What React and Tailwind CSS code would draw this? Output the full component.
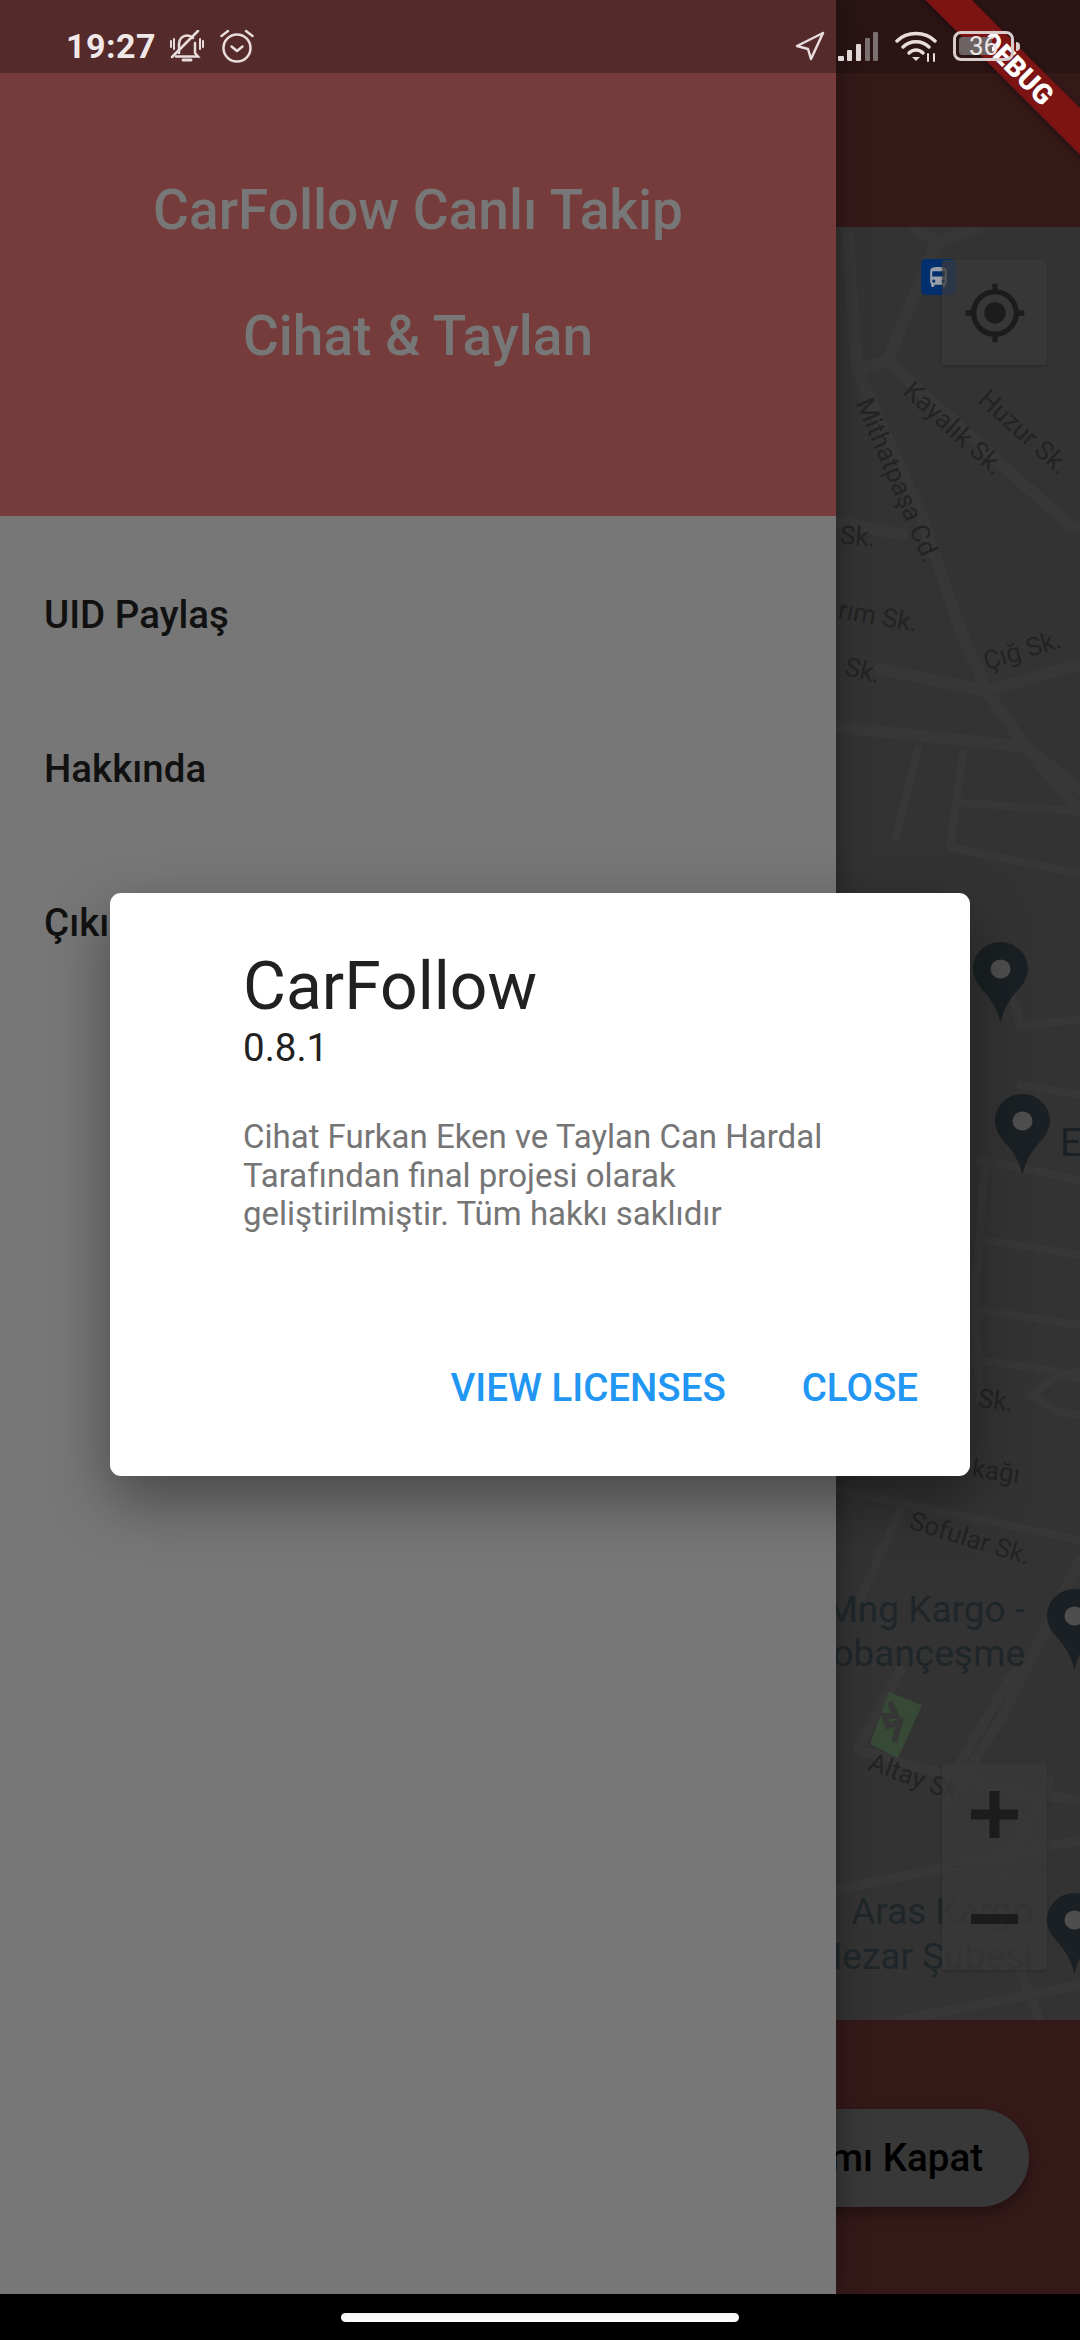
import React from 'react'

const PinIcon = ({ className }) => (
  <svg viewBox="0 0 55 81" className={className}>
    <path fill="#1a2023" d="M27.5 0C12.3 0 0 12 0 27c0 10 6 17 13 25 6 7 11 15 14.500 29 3-14 8-22 14-29 7-8 13.500-15 13.500-25C55 12 42.700 0 27.500 0z" />
    <ellipse cx="27.500" cy="27" rx="10" ry="9.500" fill="#4e4e4e" />
  </svg>
)

const MapRoads = () => (
  <svg viewBox="836 227 244 1793" className="absolute right-0 top-0 w-[244px] h-[1793px]" fill="none" stroke="#373737" strokeLinejoin="round" strokeLinecap="round">
    <g strokeWidth="12">
      <path d="M847 227L857 370L920 512L960 629L987 691L1027 749L1080 811" />
      <path d="M857 370L887 361L937 242L915 227" />
      <path d="M937 242L980 227" />
      <path d="M887 361L1070 526L1080 528" />
      <path d="M836 727L963 740L1027 747L1080 790" />
      <path d="M880 669L987 691L1080 664" />
      <path d="M836 521L903 535" />
    </g>
    <g strokeWidth="8">
      <path d="M918 749L896 838" />
      <path d="M963 753L950 847L1080 874" />
      <path d="M963 803L1080 811" />
      <path d="M1000 945L1020 1025L1080 1020" />
      <path d="M1020 1085L1080 1095" />
      <path d="M980 1160L1080 1180" />
      <path d="M985 1240L1080 1255" />
      <path d="M980 1310L1080 1325" />
      <path d="M985 1160L975 1300L980 1400" />
      <path d="M975 1360L1050 1370L1080 1380" />
      <path d="M1030 1395L1060 1375L1080 1372" />
      <path d="M1030 1395L1060 1412L1080 1415" />
      <path d="M836 1490L1080 1540" />
      <path d="M900 1510L860 1600" />
    </g>
    <g strokeWidth="10">
      <path d="M1080 1560L1000 1720L950 1800" />
      <path d="M900 1670L858 1750" />
      <path d="M1015 1670L950 1780" />
      <path d="M858 1750L1000 1790L1080 1800" />
      <path d="M1050 1780L1000 1880" />
      <path d="M836 1890L1080 1840" />
      <path d="M1020 1970L1040 2020" />
      <path d="M900 2020L1080 1985" />
    </g>
  </svg>
)

const BellOffIcon = () => (
  <svg viewBox="0 0 34 33" className="w-[34px] h-[33px]" fill="none" stroke="#e8dcdc" strokeWidth="2.500" strokeLinecap="round">
    <path d="M9 23V14c0-5 3.500-8.500 8-8.500 2.500 0 4.500 1 6 2.500M25 13v10l3 3.500H6" />
    <path d="M13 30h8" strokeWidth="3" />
    <path d="M2 27L28 1" />
    <path d="M1 11v6M4 9v10M30 9v10M33 11v6" strokeWidth="2" />
  </svg>
)

const AlarmIcon = () => (
  <svg viewBox="0 0 34 34" className="w-[34px] h-[34px]" fill="none" stroke="#e8dcdc" strokeWidth="2.500" strokeLinecap="round" strokeLinejoin="round">
    <circle cx="17" cy="19" r="13.500" />
    <path d="M11.500 17.500L17 22l5.500-4.500" />
    <path d="M1.500 7L8 2M32.500 7L26 2" />
  </svg>
)

const NavArrowIcon = () => (
  <svg viewBox="0 0 30 30" className="w-[30px] h-[30px]" fill="none" stroke="#e8dcdc" strokeWidth="2.500" strokeLinejoin="round">
    <path d="M28 2L2 15l11 3 3 10z" />
  </svg>
)

const SignalIcon = () => (
  <svg viewBox="0 0 40 29" className="w-[40px] h-[29px]">
    <rect x="0" y="24" width="6" height="5" rx="1" fill="#e0d6d6" />
    <rect x="9" y="18" width="5" height="11" rx="1" fill="#e0d6d6" />
    <rect x="18" y="12" width="5" height="17" rx="1" fill="#e0d6d6" />
    <rect x="27" y="6" width="5" height="23" rx="1" fill="#7a7070" />
    <rect x="35" y="0" width="5" height="29" rx="1" fill="#7a7070" />
  </svg>
)

const WifiIcon = () => (
  <svg viewBox="0 0 43 32" className="w-[43px] h-[32px]" fill="none" stroke="#e8dcdc" strokeWidth="3.500" strokeLinecap="round">
    <path d="M2 11C12 1 30 1 40 11" />
    <path d="M8 17C15 10 27 10 34 17" />
    <path d="M14 23C18 19 24 19 28 23" />
    <path d="M21 31l-4-4h8z" fill="#e8dcdc" stroke="none" />
    <path d="M33 31v-7M39 31v-7" strokeWidth="2" />
  </svg>
)

const StatusBar = () => (
  <div className="absolute left-0 top-0 z-30 w-full h-[73px] flex items-center pl-[66px] pr-[60px] pt-[19px] text-[#f0e8e8]">
    <span className="text-[34px] leading-none font-bold tracking-[0.5px]">19:27</span>
    <div className="ml-[14px] flex items-center gap-[16px]"><BellOffIcon /><AlarmIcon /></div>
    <div className="ml-auto flex items-center">
      <NavArrowIcon />
      <div className="ml-[13px]"><SignalIcon /></div>
      <div className="ml-[17px]"><WifiIcon /></div>
      <div className="ml-[15px] flex items-center">
        <div className="relative w-[61px] h-[30px] rounded-[8px] border-[3px] border-[#d8cccc] flex items-center justify-center">
          <div className="absolute left-[3px] top-[3px] bottom-[3px] w-[33px] rounded-[3px] bg-[#6d6363]" />
          <span className="relative text-[26px] leading-none text-[#eee6e6]">36</span>
        </div>
        <div className="ml-[2px] w-[4px] h-[9px] rounded-r-sm bg-[#d8cccc]" />
      </div>
    </div>
  </div>
)

const DebugBanner = () => (
  <div className="absolute z-20 left-[867px] top-[52px] w-[300px] h-[33px] rotate-45 bg-[#7c1414] flex items-center justify-center shadow-[0_2px_6px_rgba(0,0,0,0.3)]">
    <span className="text-[28px] leading-none font-black text-white">DEBUG</span>
  </div>
)

const MapView = () => (
  <div className="relative h-[1793px] bg-[#333333] overflow-hidden">
    <MapRoads />
    {/* street labels */}
    <span className="absolute left-[898px] top-[253px] -translate-x-1/2 -translate-y-1/2 rotate-[67deg] whitespace-nowrap text-[26px] leading-none text-[#232323]">Mithatpaşa Cd.</span>
    <span className="absolute left-[954px] top-[201px] -translate-x-1/2 -translate-y-1/2 rotate-[42deg] whitespace-nowrap text-[26px] leading-none text-[#232323]">Kayalık Sk.</span>
    <span className="absolute left-[1024px] top-[205px] -translate-x-1/2 -translate-y-1/2 rotate-[42deg] whitespace-nowrap text-[26px] leading-none text-[#232323]">Huzur Sk.</span>
    <span className="absolute left-[840px] top-[296px] rotate-[5deg] whitespace-nowrap text-[26px] leading-none text-[#232323]">Sk.</span>
    <span className="absolute left-[838px] top-[376px] rotate-[10deg] whitespace-nowrap text-[26px] leading-none text-[#232323]">rım Sk.</span>
    <span className="absolute left-[845px] top-[430px] rotate-[14deg] whitespace-nowrap text-[26px] leading-none text-[#232323]">Sk.</span>
    <span className="absolute left-[1022px] top-[423px] -translate-x-1/2 -translate-y-1/2 -rotate-[17deg] whitespace-nowrap text-[26px] leading-none text-[#232323]">Çığ Sk.</span>
    <span className="absolute left-[978px] top-[1160px] rotate-[8deg] whitespace-nowrap text-[26px] leading-none text-[#232323]">Sk.</span>
    <span className="absolute left-[972px] top-[1231px] rotate-[8deg] whitespace-nowrap text-[26px] leading-none text-[#232323]">kağı</span>
    <span className="absolute left-[970px] top-[1311px] -translate-x-1/2 -translate-y-1/2 rotate-[17deg] whitespace-nowrap text-[26px] leading-none text-[#232323]">Sofular Sk.</span>
    {/* park */}
    <svg viewBox="0 0 52 66" className="absolute left-[870px] top-[1465px] w-[52px] h-[66px]">
      <path d="M19 0L52 13 28 66 0 52z" fill="#374a35" />
      <path d="M20 10L26 24 14 24 18 34 30 30 24 50" fill="none" stroke="#363636" strokeWidth="6" />
    </svg>
    <span className="absolute left-[917px] top-[1551px] -translate-x-1/2 -translate-y-1/2 rotate-[20deg] whitespace-nowrap text-[26px] leading-none text-[#232323]">Altay Sk.</span>
    {/* place labels */}
    <span className="absolute right-[55px] top-[1361px] whitespace-nowrap text-[37px] leading-[44px] text-right text-[#1f2629]">Mng Kargo -<br />Çobançeşme</span>
    <span className="absolute right-[47px] top-[1662px] whitespace-nowrap text-[37px] leading-[45px] text-right text-[#1f2629]">Aras Kargo<br />Mezar Şubesi</span>
    <span className="absolute left-[1060px] top-[894px] text-[38px] leading-[44px] text-[#1a2023]">E</span>
    {/* pins */}
    <PinIcon className="absolute left-[973px] top-[715px] w-[55px] h-[81px]" />
    <PinIcon className="absolute left-[995px] top-[867px] w-[55px] h-[81px]" />
    <PinIcon className="absolute left-[1047px] top-[1362px] w-[55px] h-[81px]" />
    <PinIcon className="absolute left-[1047px] top-[1666px] w-[55px] h-[81px]" />
    {/* bus stop */}
    <div className="absolute left-[921px] top-[32px] w-[35px] h-[36px] rounded-[5px] bg-[#02306f] flex items-center justify-center">
      <svg viewBox="0 0 24 24" className="w-[25px] h-[25px]" fill="#9a9fa8">
        <path d="M4 16c0 .88.39 1.67 1 2.220V20c0 .55.45 1 1 1h1c.55 0 1-.45 1-1v-1h8v1c0 .55.45 1 1 1h1c.55 0 1-.45 1-1v-1.780c.61-.55 1-1.340 1-2.220V6c0-3.500-3.580-4-8-4s-8 .5-8 4v10zm3.500 1c-.83 0-1.500-.67-1.500-1.500S6.670 14 7.500 14s1.500.67 1.500 1.500S8.330 17 7.500 17zm9 0c-.83 0-1.500-.67-1.500-1.500s.67-1.500 1.500-1.500 1.500.67 1.500 1.500-.67 1.500-1.500 1.500zm1.500-6H6V6h12v5z" />
      </svg>
    </div>
    {/* map controls */}
    <div className="absolute left-[942px] top-[33px] w-[105px] h-[105px] rounded-[3px] bg-[#3a3a3a]/75 shadow-[0_1px_3px_rgba(0,0,0,0.2)] flex items-center justify-center">
      <svg viewBox="0 0 24 24" className="w-[64px] h-[64px]" fill="#1c1c1c">
        <path d="M12 8c-2.210 0-4 1.790-4 4s1.790 4 4 4 4-1.790 4-4-1.790-4-4-4zm8.940 3c-.46-4.170-3.770-7.480-7.940-7.940V1h-2v2.060C6.830 3.520 3.520 6.830 3.060 11H1v2h2.060c.46 4.170 3.770 7.480 7.940 7.940V23h2v-2.060c4.170-.46 7.480-3.770 7.940-7.940H23v-2h-2.060zM12 19c-3.870 0-7-3.130-7-7s3.130-7 7-7 7 3.130 7 7-3.130 7-7 7z" />
      </svg>
    </div>
    <div className="absolute left-[942px] top-[1536px] w-[105px] h-[207px] rounded-[3px] bg-[#3a3a3a]/75 shadow-[0_1px_3px_rgba(0,0,0,0.2)] flex flex-col">
      <div className="flex-1 flex items-center justify-center border-b border-[#343434]">
        <svg viewBox="0 0 47 47" className="w-[47px] h-[47px]" fill="#1c1c1c"><path d="M18.500 0h10v18.500H47v10H28.500V47h-10V28.500H0v-10h18.500z" /></svg>
      </div>
      <div className="flex-1 flex items-center justify-center">
        <div className="w-[47px] h-[10px] bg-[#1c1c1c]" />
      </div>
    </div>
  </div>
)

const Drawer = () => (
  <div className="absolute z-10 left-0 top-0 bottom-[46px] w-[836px] flex flex-col bg-[#777777] shadow-[0_0_30px_rgba(0,0,0,0.35)]">
    <div className="h-[73px] bg-[#552a2a]" />
    <div className="h-[443px] bg-[#763c3c] flex flex-col items-center pt-[98px] gap-[48px] text-[#777777]">
      <p className="text-[55px] leading-[78px] font-medium">CarFollow Canlı Takip</p>
      <p className="text-[55px] leading-[78px] font-medium">Cihat &amp; Taylan</p>
    </div>
    <div className="flex-1 pt-[22px]">
      {['UID Paylaş', 'Hakkında', 'Çıkış'].map((item) => (
        <div key={item} className="h-[154px] flex items-center pl-[44px] text-[38.500px] font-medium text-[#111111]">
          {item}
        </div>
      ))}
    </div>
  </div>
)

const AboutDialog = () => (
  <div className="absolute z-20 left-[110px] top-[893px] w-[860px] h-[583px] rounded-[11px] bg-white shadow-[0_24px_60px_rgba(0,0,0,0.4)] flex flex-col pl-[133px] pr-[52px] pt-[55px] pb-[66px]">
    <p className="text-[66px] leading-[78px] text-[#212121]">CarFollow</p>
    <p className="text-[38.500px] leading-[44px] text-[#212121]">0.8.1</p>
    <div className="mt-[48px] text-[33px] leading-[38.500px] text-[#757575]">
      <p>Cihat Furkan Eken ve Taylan Can Hardal</p>
      <p>Tarafından final projesi olarak</p>
      <p>geliştirilmiştir. Tüm hakkı saklıdır</p>
    </div>
    <div className="mt-auto flex justify-end gap-[76px] text-[38.500px] leading-[44px] font-medium text-[#2196f3]">
      <span>VIEW LICENSES</span>
      <span>CLOSE</span>
    </div>
  </div>
)

export default function App() {
  return (
    <div className="relative w-[1080px] h-[2340px] overflow-hidden bg-black font-['Roboto',sans-serif] flex flex-col">
      <div className="h-[227px] bg-[#351919]">
        <div className="h-[73px] bg-[#2a1414]" />
      </div>
      <MapView />
      <div className="h-[274px] bg-[#351919] relative">
        <div className="absolute right-[51px] top-[89px] h-[98px] pl-[60px] pr-[46px] rounded-full bg-[#383838] shadow-[0_6px_12px_rgba(0,0,0,0.35)] flex items-center text-[38.500px] font-medium text-black whitespace-nowrap">
          Paylaşımı Kapat
        </div>
      </div>
      <div className="h-[46px] bg-black flex items-center justify-center">
        <div className="w-[398px] h-[9px] rounded-full bg-white" />
      </div>
      <Drawer />
      <DebugBanner />
      <AboutDialog />
      <StatusBar />
    </div>
  )
}
